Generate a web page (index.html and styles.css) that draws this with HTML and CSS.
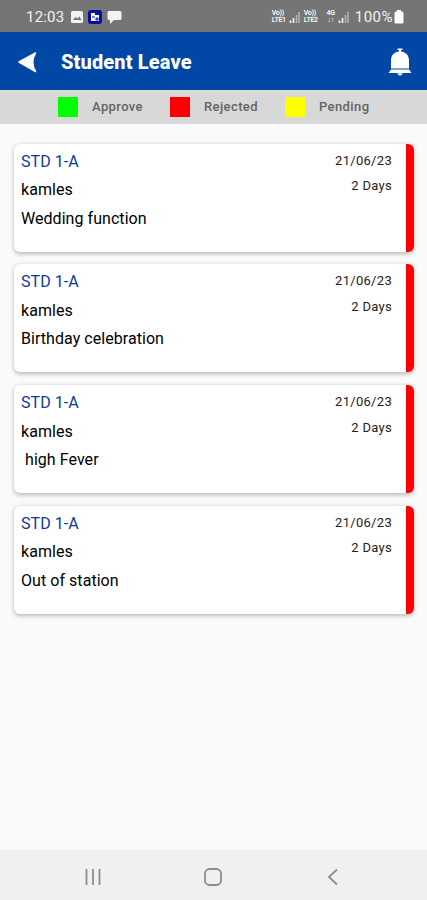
FILE: index.html
```html
<!DOCTYPE html>
<html lang="en">
<head>
  <meta charset="UTF-8" />
  <meta name="viewport" content="width=device-width, initial-scale=1" />
  <title>Student Leave</title>
  <link rel="stylesheet" href="styles.css">
</head>
<body>
  <div class="screen">
    <div class="status-bar">
      <span class="clock">12:03</span>
      <svg class="status-left" width="52" height="16" viewBox="0 0 52 16">
        <rect x="1" y="2" width="12" height="12" rx="1.500" fill="#f2f2f2"/>
        <path d="M3 11l2.500-3 2 1.500 2-2 2 3.500z" fill="#757575"/>
        <rect x="18" y="1" width="14" height="14" rx="3" fill="#0909a6"/>
        <path d="M21 4h4v2h4v6h-8z" fill="#fff"/>
        <path d="M22 8h3M26 9h2v2h-2z" stroke="#0909a6" fill="none"/>
        <path d="M39 2h11a1.500 1.500 0 0 1 1.500 1.500v6a1.500 1.500 0 0 1-1.500 1.500h-6l-4 4v-4h-1a1.500 1.500 0 0 1-1.500-1.500v-6a1.500 1.500 0 0 1 1.500-1.500z" fill="#f2f2f2"/>
      </svg>
      <div class="status-right">
        <div class="network"><span>Vo))</span><span>LTE1</span></div>
        <svg class="signal" width="11" height="12" viewBox="0 0 11 12">
          <path d="M1.500 12v-2.500M4.500 12v-5" stroke="#f2f2f2" stroke-width="1.700"/>
          <path d="M7.500 12v-8M10 12v-11" stroke="#b5b5b5" stroke-width="1.500"/>
        </svg>
        <div class="network"><span>Vo))</span><span>LTE2</span></div>
        <div class="network data"><span>4G</span><span>↓↑</span></div>
        <svg class="signal" width="11" height="12" viewBox="0 0 11 12">
          <path d="M1.500 12v-2.500M4.500 12v-5" stroke="#f2f2f2" stroke-width="1.700"/>
          <path d="M7.500 12v-8M10 12v-11" stroke="#b5b5b5" stroke-width="1.500"/>
        </svg>
        <span class="percent">100%</span>
        <svg width="10" height="14" viewBox="0 0 10 14">
          <path d="M3 0h4v1.500h1a1.500 1.500 0 0 1 1.500 1.500v9a1.500 1.500 0 0 1-1.500 1.500h-6a1.500 1.500 0 0 1-1.500-1.500v-9a1.500 1.500 0 0 1 1.500-1.500h1z" fill="#fff"/>
        </svg>
      </div>
    </div>

    <div class="header">
      <svg width="20" height="22" viewBox="0 0 20 22">
        <path d="M1 11L17.500 2Q12 11 17.500 20.500z" fill="#fff" stroke="#fff" stroke-width="1.500" stroke-linejoin="round"/>
      </svg>
      <h1>Student Leave</h1>
      <svg class="bell" width="24" height="28" viewBox="0 0 24 28">
        <path d="M9.500 0.500h5v1.500h-1.500v1.500c5 .5 8 4 8 9v8H3v-8c0-5 3-8.500 8-9v-1.500H9.500z" fill="#fff"/>
        <path d="M3 21.500h18l2.500 3.500H.5z" fill="#fff"/>
        <path d="M9.500 25h5a2.500 2.800 0 0 1-5 0z" fill="#c5d3ea"/>
      </svg>
    </div>

    <div class="legend">
      <div class="legend-item"><i class="swatch approve"></i>Approve</div>
      <div class="legend-item"><i class="swatch rejected"></i>Rejected</div>
      <div class="legend-item"><i class="swatch pending"></i>Pending</div>
    </div>

    <div class="list">
      <div class="card">
        <div class="info">
          <p class="std">STD 1-A</p>
          <p>kamles</p>
          <p>Wedding function</p>
        </div>
        <div class="dates"><p>21/06/23</p><p>2 Days</p></div>
      </div>
      <div class="card">
        <div class="info">
          <p class="std">STD 1-A</p>
          <p>kamles</p>
          <p>Birthday celebration</p>
        </div>
        <div class="dates"><p>21/06/23</p><p>2 Days</p></div>
      </div>
      <div class="card">
        <div class="info">
          <p class="std">STD 1-A</p>
          <p>kamles</p>
          <p>&nbsp;high Fever</p>
        </div>
        <div class="dates"><p>21/06/23</p><p>2 Days</p></div>
      </div>
      <div class="card">
        <div class="info">
          <p class="std">STD 1-A</p>
          <p>kamles</p>
          <p>Out of station</p>
        </div>
        <div class="dates"><p>21/06/23</p><p>2 Days</p></div>
      </div>
    </div>

    <div class="nav-bar">
      <svg width="18" height="18" viewBox="0 0 18 18">
        <path d="M2.500 1v16M9 1v16M15.500 1v16" stroke="#8c8c8c" stroke-width="1.800"/>
      </svg>
      <svg width="18" height="18" viewBox="0 0 18 18">
        <rect x="1" y="1" width="16" height="16" rx="4.500" fill="none" stroke="#8c8c8c" stroke-width="1.800"/>
      </svg>
      <svg width="18" height="18" viewBox="0 0 18 18">
        <path d="M13 1.500L5 9l8 7.500" fill="none" stroke="#8c8c8c" stroke-width="1.800"/>
      </svg>
    </div>
  </div>
</body>
</html>
```

FILE: styles.css
```css
body {
  font-family: Roboto, "Liberation Sans", sans-serif;
  background: #fafafa;
  margin: 0;
}
h1, p {
  margin: 0;
}
svg {
  display: block;
  flex: none;
}
.screen {
  display: flex;
  flex-direction: column;
  height: 900px;
  overflow: hidden;
}
.status-bar {
  display: flex;
  align-items: center;
  box-sizing: border-box;
  height: 32px;
  padding: 1px 23px 0 26px;
  background: #757575;
  color: #f2f2f2;
}
.clock {
  width: 44px;
  font-size: 15px;
  letter-spacing: 0.2px;
}
.status-right {
  display: flex;
  align-items: center;
  margin-left: auto;
}
.network {
  display: flex;
  flex-direction: column;
  width: 17px;
  font-size: 7px;
  font-weight: 700;
  line-height: 7px;
  letter-spacing: -0.3px;
}
.network.data {
  width: 14px;
  margin-left: 3px;
  text-align: center;
}
.signal {
  margin-right: 4px;
}
.percent {
  margin: 0 1px 0 2px;
  font-size: 15px;
  letter-spacing: 0.5px;
}
.header {
  display: flex;
  align-items: center;
  box-sizing: border-box;
  height: 58px;
  padding: 2px 15px 0 18px;
  background: #0047a6;
  color: #fff;
}
.header h1 {
  margin-left: 23px;
  font-size: 20px;
  font-weight: 800;
  letter-spacing: 0.15px;
}
.bell {
  margin-left: auto;
}
.legend {
  display: flex;
  height: 33.5px;
  padding-left: 58px;
  align-items: center;
  background: #d8d8d8;
  color: #646464;
  font-size: 13px;
  font-weight: 500;
  letter-spacing: 0.4px;
}
.legend-item {
  display: flex;
  align-items: center;
  margin-right: 27px;
}
.swatch {
  width: 20px;
  height: 20px;
  margin-right: 14px;
}
.approve {
  background: #00ff00;
}
.rejected {
  background: #ff0000;
}
.pending {
  background: #ffff00;
}
.list {
  display: flex;
  flex: 1;
  flex-direction: column;
  gap: 12.8px;
  padding: 20px 13px 0 14px;
}
.card {
  display: flex;
  justify-content: space-between;
  box-sizing: border-box;
  height: 108px;
  padding: 4px 14px 0 7px;
  border-right: 8px solid #ff0000;
  border-radius: 6px;
  background: #fff;
  box-shadow: 0 1.5px 4px rgba(0,0,0,0.26);
}
.info {
  font-size: 16px;
  line-height: 28.5px;
  letter-spacing: 0.05px;
  color: #000;
}
.info .std {
  color: #0c3a9a;
}
.dates {
  font-size: 13px;
  line-height: 25.5px;
  letter-spacing: 0.3px;
  text-align: right;
  color: #222;
}
.nav-bar {
  display: flex;
  align-items: center;
  justify-content: space-between;
  box-sizing: border-box;
  height: 50px;
  padding: 3px 85px 0 84px;
  background: #f0f0f0;
}
```
